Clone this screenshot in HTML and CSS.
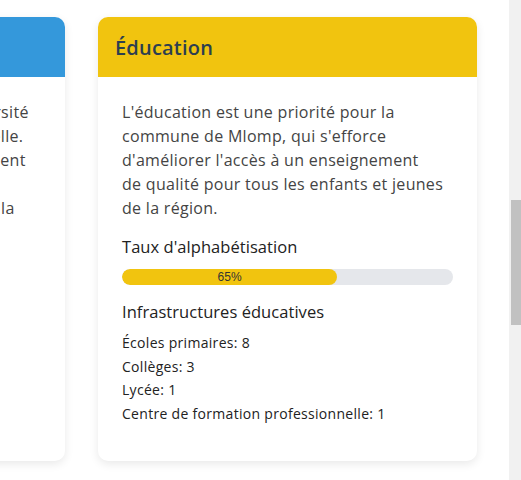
FILE: index.html
```html
<!DOCTYPE html>
<html lang="fr">
<head>
<meta charset="utf-8">
<title>Mlomp</title>
<link rel="stylesheet" href="styles.css">
</head>
<body>
<div class="viewport">
  <main class="page">
    <div class="grid">
      <section class="card">
        <header class="card-header blue"><h2>Environnement</h2></header>
        <div class="card-body">
          <p class="text">Mlomp offre une très grande biodiversité<br>et une richesse naturelle exceptionnelle.<br>Les habitants protègent l'environnement<br>grâce à des pratiques durables,<br>transmises pendant des générations, la</p>
        </div>
      </section>
      <section class="card">
        <header class="card-header yellow"><h2>Éducation</h2></header>
        <div class="card-body">
          <p class="text">L'éducation est une priorité pour la<br>commune de Mlomp, qui s'efforce<br>d'améliorer l'accès à un enseignement<br>de qualité pour tous les enfants et jeunes<br>de la région.</p>
          <h3 class="sub">Taux d'alphabétisation</h3>
          <div class="bar"><div class="fill" style="width:65%">65%</div></div>
          <h3 class="sub">Infrastructures éducatives</h3>
          <ul class="list">
            <li>Écoles primaires: 8</li>
            <li>Collèges: 3</li>
            <li>Lycée: 1</li>
            <li>Centre de formation professionnelle: 1</li>
          </ul>
        </div>
      </section>
    </div>
  </main>
  <div class="scrollbar"><div class="thumb"></div></div>
</div>
</body>
</html>
```
FILE: styles.css
```css
* { box-sizing: border-box; }
html, body { margin: 0; padding: 0; background: #fff; }
body { font-family: "Open Sans", "Liberation Sans", sans-serif; color: #444; }
.viewport { display: flex; height: 480px; overflow: hidden; }
.page { flex: 1; overflow: hidden; padding-top: 17px; }
.grid { display: flex; gap: 33px; margin-left: -314px; }
.card {
  flex: 0 0 379px;
  height: 444px;
  background: #fff;
  border-radius: 10px;
  box-shadow: 0 3px 10px rgba(0,0,0,0.09);
  overflow: hidden;
}
.card-header { height: 60px; display: flex; align-items: center; padding: 0 17px; }
.card-header.blue { background: #3498db; }
.card-header.yellow { background: #f1c40f; }
.card-header h2 { margin: 0; font-size: 20px; font-weight: 600; color: #2c3e50; letter-spacing: 0.2px; }
.card-body { padding: 23px 24px; }
.text { margin: 0; font-size: 16px; line-height: 24px; color: #444; letter-spacing: 0.3px; white-space: nowrap; }
.sub { margin: 15px 0 0; font-size: 16.5px; font-weight: 500; color: #222; line-height: 24px; letter-spacing: 0.05px; }
.bar { margin-top: 10px; height: 16px; background: #e5e7eb; border-radius: 8px; overflow: hidden; }
.fill { height: 100%; background: #f1c40f; border-radius: 8px; font-family: "Liberation Sans", Arial, sans-serif; font-size: 12px; line-height: 16px; text-align: center; color: #333; }
.sub + .list { margin-top: 7px; }
.list { list-style: none; padding: 0; margin: 0; font-size: 14px; line-height: 23.7px; color: #222; letter-spacing: 0.3px; }
.scrollbar { flex: 0 0 12px; background: #f1f1f1; padding: 200px 0 0 2px; }
.thumb { height: 125px; background: #c1c1c1; }
```
